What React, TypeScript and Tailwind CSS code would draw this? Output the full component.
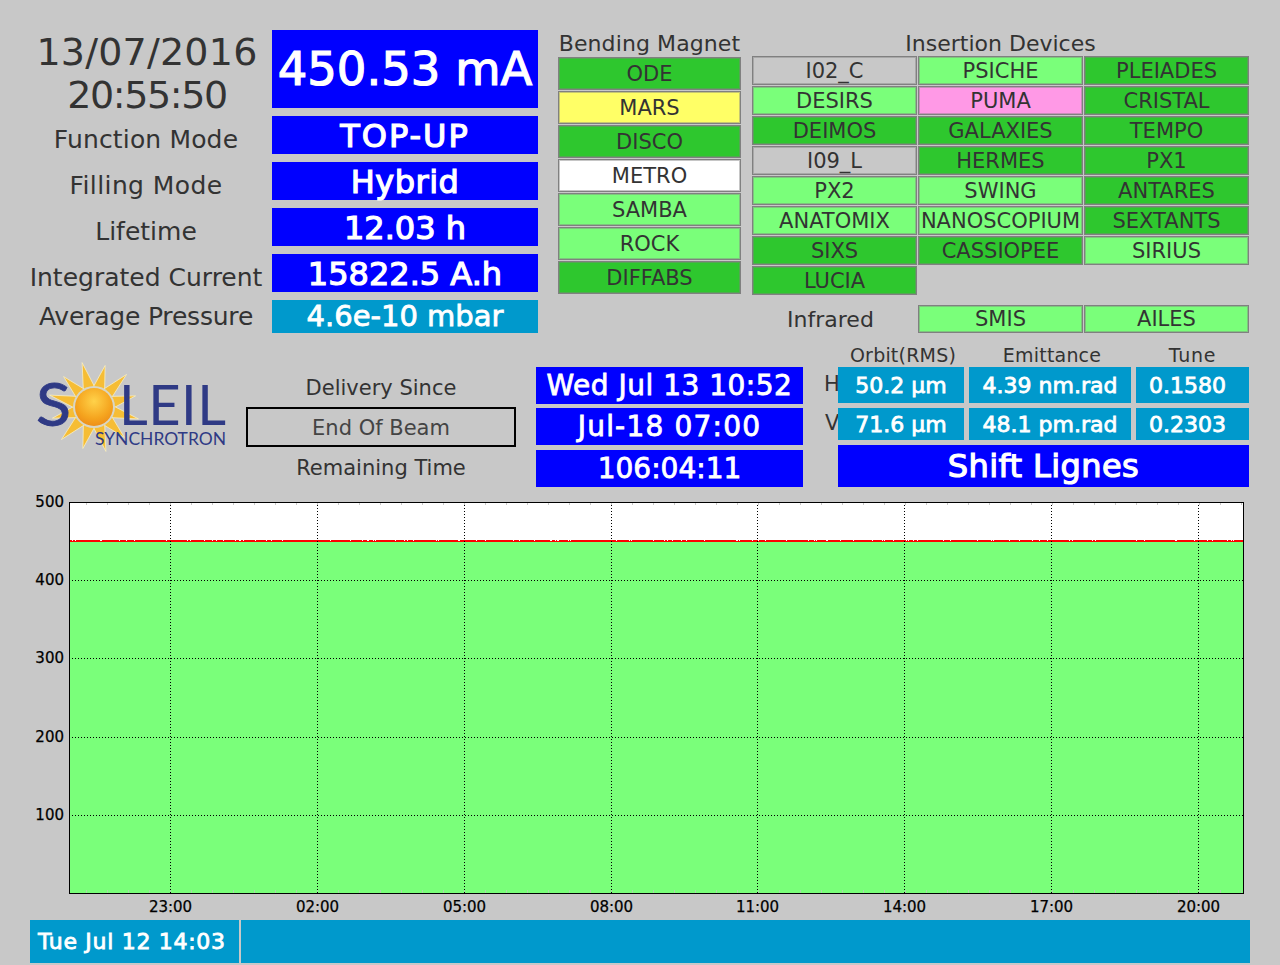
import React from 'react';

const FONT = "font-['DejaVu_Sans',sans-serif]";

const BENDING = [
    { name: 'ODE', tone: 'bg-[#2ec72e]' },
    { name: 'MARS', tone: 'bg-[#ffff66]' },
    { name: 'DISCO', tone: 'bg-[#2ec72e]' },
    { name: 'METRO', tone: 'bg-white' },
    { name: 'SAMBA', tone: 'bg-[#7aff7a]' },
    { name: 'ROCK', tone: 'bg-[#7aff7a]' },
    { name: 'DIFFABS', tone: 'bg-[#2ec72e]' },
];

const INSERTION = [
    { name: 'I02_C', tone: 'bg-[#c8c8c8]' },
    { name: 'PSICHE', tone: 'bg-[#7aff7a]' },
    { name: 'PLEIADES', tone: 'bg-[#2ec72e]' },
    { name: 'DESIRS', tone: 'bg-[#7aff7a]' },
    { name: 'PUMA', tone: 'bg-[#ff99e6]' },
    { name: 'CRISTAL', tone: 'bg-[#2ec72e]' },
    { name: 'DEIMOS', tone: 'bg-[#2ec72e]' },
    { name: 'GALAXIES', tone: 'bg-[#2ec72e]' },
    { name: 'TEMPO', tone: 'bg-[#2ec72e]' },
    { name: 'I09_L', tone: 'bg-[#c8c8c8]' },
    { name: 'HERMES', tone: 'bg-[#2ec72e]' },
    { name: 'PX1', tone: 'bg-[#2ec72e]' },
    { name: 'PX2', tone: 'bg-[#7aff7a]' },
    { name: 'SWING', tone: 'bg-[#7aff7a]' },
    { name: 'ANTARES', tone: 'bg-[#2ec72e]' },
    { name: 'ANATOMIX', tone: 'bg-[#7aff7a]' },
    { name: 'NANOSCOPIUM', tone: 'bg-[#7aff7a]' },
    { name: 'SEXTANTS', tone: 'bg-[#2ec72e]' },
    { name: 'SIXS', tone: 'bg-[#2ec72e]' },
    { name: 'CASSIOPEE', tone: 'bg-[#2ec72e]' },
    { name: 'SIRIUS', tone: 'bg-[#7aff7a]' },
    { name: 'LUCIA', tone: 'bg-[#2ec72e]' },
];

const LABELS = [
    { text: 'Function Mode', extra: 'tracking-[0.15px]' },
    { text: 'Filling Mode', extra: 'tracking-[0.4px]' },
    { text: 'Lifetime', extra: '' },
    { text: 'Integrated Current', extra: '' },
];

const VALUES = [
    { text: 'TOP-UP', extra: 'tracking-[2px]' },
    { text: 'Hybrid', extra: 'tracking-[0.5px]' },
    { text: '12.03 h', extra: '' },
    { text: '15822.5 A.h', extra: '' },
];

const HEAVY = '[-webkit-text-stroke:1.2px_white] text-white';
const MEDIUM = '[-webkit-text-stroke:0.8px_white] text-white';

const Cell = ({ name, tone, h }: { name: string; tone: string; h: string }) => (
    <div className={`${tone} ${h} border border-[#808080] shadow-[inset_0_0_0_1px_rgba(128,128,128,0.45)] pt-[2px] flex items-center justify-center text-[21px] text-[#333] whitespace-nowrap overflow-hidden`}>
        {name}
    </div>
);

const Logo = () => {
    // twelve rays round the ball, long and short in turn
    const cx = 58;
    const cy = 46;
    const rays = Array.from({ length: 12 }, (_, i) => {
        const a = ((i * 30 - 105) * Math.PI) / 180;
        const len = i % 2 === 0 ? 46 : 43;
        const spread = 0.33;
        const pt = (ang: number, r: number) => `${cx + Math.cos(ang) * r},${cy + Math.sin(ang) * r}`;
        return `${pt(a - spread, 19)} ${pt(a, len)} ${pt(a + spread, 19)}`;
    });
    return (
        <svg width="192" height="94" viewBox="0 0 192 94" className="block">
            <defs>
                <radialGradient id="ball" cx="50%" cy="35%" r="65%">
                    <stop offset="0%" stopColor="#ffd24a" />
                    <stop offset="70%" stopColor="#f5a41e" />
                    <stop offset="100%" stopColor="#ee8f18" />
                </radialGradient>
            </defs>
            {rays.map((p, i) => (
                <polygon key={i} points={p} fill="#f6bd35" stroke="#f8efc4" strokeWidth="0.8" />
            ))}
            <text x="0" y="65" fontFamily="Lato, sans-serif" fontSize="60" fill="#2f3a85" stroke="#2f3a85" strokeWidth="0.8" textLength="35" lengthAdjust="spacingAndGlyphs">S</text>
            <circle cx={cx} cy={cy} r="21" fill="#d9d6c4" />
            <circle cx={cx} cy={cy} r="19" fill="url(#ball)" />
            <text x="83" y="64" fontFamily="Lato, sans-serif" fontSize="56" fill="#2f3a85" textLength="107" lengthAdjust="spacing">LEIL</text>
            <text x="59" y="84" fontFamily="Lato, sans-serif" fontSize="17" fill="#2f3a85" textLength="131" lengthAdjust="spacingAndGlyphs">SYNCHROTRON</text>
        </svg>
    );
};

const MAJOR_X = [170, 317, 464, 611, 757, 904, 1051, 1198];
const TIMES = ['23:00', '02:00', '05:00', '08:00', '11:00', '14:00', '17:00', '20:00'];
const GRID_Y = [
    { y: 502, label: '500' },
    { y: 580, label: '400' },
    { y: 658, label: '300' },
    { y: 737, label: '200' },
    { y: 815, label: '100' },
];

const MINOR_X = Array.from({ length: 56 }, (_, i) => 86 + i * 21).filter(x => x < 1243);

// sparse white specks along the beam current trace
const SPECKS = Array.from({ length: 110 }, (_, i) => 72 + ((i * 137 + (i * i * 31) % 97) % 1168));

const Chart = () => (
    <svg width="1280" height="432" viewBox="0 488 1280 432" className="block">
        <rect x="69" y="502" width="1175" height="39" fill="#fff" />
        <rect x="69" y="541" width="1175" height="352" fill="#7aff7a" />
        <rect x="69" y="540" width="1175" height="2" fill="#ff0000" />
        {SPECKS.map((x, i) => (
            <rect key={i} x={x} y="540" width="1" height="1" fill="#fff" />
        ))}
        {MINOR_X.map(x => (
            <g key={x}>
                <rect x={x} y="503" width="1" height="2" fill="#c8c8c8" />
                <rect x={x} y="890" width="1" height="3" fill="#a8d8a8" />
            </g>
        ))}
        {MAJOR_X.map(x => (
            <line key={x} x1={x + 0.5} y1="502" x2={x + 0.5} y2="893" stroke="#000" strokeDasharray="1 2" />
        ))}
        {GRID_Y.slice(1).map(g => (
            <line key={g.y} x1="69" y1={g.y + 0.5} x2="1244" y2={g.y + 0.5} stroke="#000" strokeDasharray="1 2" />
        ))}
        <rect x="69.5" y="502.5" width="1174" height="391" fill="none" stroke="#000" />
        {GRID_Y.map(g => (
            <text key={g.y} x="64" y={g.y + 5} textAnchor="end" fontFamily="'DejaVu Sans', sans-serif" fontSize="15" fill="#000" stroke="#000" strokeWidth="0.25">
                {g.label}
            </text>
        ))}
        {TIMES.map((t, i) => (
            <text key={t} x={MAJOR_X[i] + 0.5} y="912" textAnchor="middle" fontFamily="'DejaVu Sans', sans-serif" fontSize="15" fill="#000" stroke="#000" strokeWidth="0.25">
                {t}
            </text>
        ))}
    </svg>
);

const App: React.FC = () => {
    return (
        <div className={`${FONT} w-[1280px] h-[965px] bg-[#c8c8c8] overflow-hidden flex flex-col text-[#333]`}>

            {/* Top status block */}
            <div className="h-[315px] pt-[30px] pl-[30px] flex items-start box-content">
                <div className="w-[232px] flex flex-col items-center">
                    <div className="h-[87px] text-[38px] tracking-[0.2px] leading-[43px] pt-[1px] pl-[2px] text-center whitespace-nowrap">
                        <div>13/07/2016</div>
                        <div className="tracking-[-1.4px]">20:55:50</div>
                    </div>
                    {LABELS.map(l => (
                        <div key={l.text} className={`h-[46px] flex items-center text-[25px] whitespace-nowrap ${l.extra}`}>{l.text}</div>
                    ))}
                    <div className="h-[32px] flex items-center text-[25px] tracking-[-0.2px] whitespace-nowrap">Average Pressure</div>
                </div>

                <div className="ml-[10px] w-[266px] flex flex-col gap-2">
                    <div className={`h-[78px] pt-[2px] bg-[#0000ff] flex items-center justify-center text-[46.5px] ${HEAVY}`}>450.53 mA</div>
                    {VALUES.map(v => (
                        <div key={v.text} className={`h-[38px] pt-[1px] bg-[#0000ff] flex items-center justify-center text-[32px] ${v.extra} ${HEAVY}`}>{v.text}</div>
                    ))}
                    <div className={`h-[33px] pt-[1px] bg-[#0099cc] flex items-center justify-center text-[29px] ${MEDIUM}`}>4.6e-10 mbar</div>
                </div>

                <div className="ml-[20px] w-[183px]">
                    <div className="h-[27px] flex items-center justify-center text-[22px] tracking-[0.1px] whitespace-nowrap">Bending Magnet</div>
                    <div className="flex flex-col gap-px">
                        {BENDING.map(b => (
                            <Cell key={b.name} name={b.name} tone={b.tone} h="h-[33px]" />
                        ))}
                    </div>
                </div>

                <div className="ml-[11px] w-[497px]">
                    <div className="h-[26px] flex items-center justify-center text-[22px] whitespace-nowrap">Insertion Devices</div>
                    <div className="grid grid-cols-3 gap-px">
                        {INSERTION.map(d => (
                            <Cell key={d.name} name={d.name} tone={d.tone} h="h-[29px]" />
                        ))}
                    </div>
                    <div className="mt-[10px] grid grid-cols-3 gap-px">
                        <div className="h-[28px] pr-[8px] flex items-center justify-center text-[22px]">Infrared</div>
                        <Cell name="SMIS" tone="bg-[#7aff7a]" h="h-[28px]" />
                        <Cell name="AILES" tone="bg-[#7aff7a]" h="h-[28px]" />
                    </div>
                </div>
            </div>

            {/* Logo, delivery and beam figures */}
            <div className="h-[143px] flex items-start">
                <div className="ml-[36px] mt-[16px] w-[190px]">
                    <Logo />
                </div>

                <div className="ml-[20px] mt-[22px] w-[270px] flex flex-col text-[21px]">
                    <div className="h-[40px] pt-[3px] flex items-center justify-center">Delivery Since</div>
                    <div className="h-[40px] pt-[3px] border-2 border-black flex items-center justify-center text-[#444]">End Of Beam</div>
                    <div className="h-[40px] pt-[3px] flex items-center justify-center">Remaining Time</div>
                </div>

                <div className={`ml-[20px] mt-[22px] w-[267px] flex flex-col text-[28px] ${MEDIUM}`}>
                    <div className="h-[37px] pt-[1px] bg-[#0000ff] tracking-[0.5px] flex items-center justify-center whitespace-nowrap">Wed Jul 13 10:52</div>
                    <div className="mt-[4px] h-[37px] pt-[1px] bg-[#0000ff] tracking-[1.2px] flex items-center justify-center">Jul-18 07:00</div>
                    <div className="mt-[5px] h-[37px] pt-[1px] bg-[#0000ff] flex items-center justify-center">106:04:11</div>
                </div>

                <div className="ml-[17px] w-[429px] text-[22px]">
                    <div className="h-[22px] grid grid-cols-[13px_126px_162px_113px] gap-x-[5px] text-[19px] text-center leading-[20px]">
                        <div />
                        <div className="pl-[4px] tracking-[0.2px]">Orbit(RMS)</div>
                        <div className="pl-[4px] tracking-[0.2px]">Emittance</div>
                        <div className="tracking-[0.8px]">Tune</div>
                    </div>
                    <div className="grid grid-cols-[13px_126px_162px_113px] grid-rows-[36px_32px_42px] gap-x-[5px] gap-y-[5px]">
                        <div className="flex items-center text-[21px] text-[#333] pl-[4px]">H</div>
                        <div className={`bg-[#0099cc] flex items-center justify-center ${MEDIUM}`}>50.2 µm</div>
                        <div className={`bg-[#0099cc] flex items-center justify-center ${MEDIUM}`}>4.39 nm.rad</div>
                        <div className={`bg-[#0099cc] flex items-center justify-center pr-[10px] ${MEDIUM}`}>0.1580</div>
                        <div className="flex items-center text-[21px] text-[#333] pl-[5px]">V</div>
                        <div className={`bg-[#0099cc] flex items-center justify-center ${MEDIUM}`}>71.6 µm</div>
                        <div className={`bg-[#0099cc] flex items-center justify-center ${MEDIUM}`}>48.1 pm.rad</div>
                        <div className={`bg-[#0099cc] flex items-center justify-center pr-[10px] ${MEDIUM}`}>0.2303</div>
                        <div />
                        <div className={`col-span-3 bg-[#0000ff] flex items-center justify-center text-[32px] tracking-[0.4px] ${HEAVY}`}>Shift Lignes</div>
                    </div>
                </div>
            </div>

            {/* Beam current history */}
            <Chart />

            {/* Footer bar */}
            <div className="ml-[30px] w-[1220px] h-[43px] flex gap-[2px]">
                <div className={`w-[209px] bg-[#0099cc] flex items-center pl-[8px] text-[22px] tracking-[0.7px] whitespace-nowrap ${MEDIUM}`}>Tue Jul 12 14:03</div>
                <div className="flex-1 bg-[#0099cc]" />
            </div>
        </div>
    );
};

export default App;
